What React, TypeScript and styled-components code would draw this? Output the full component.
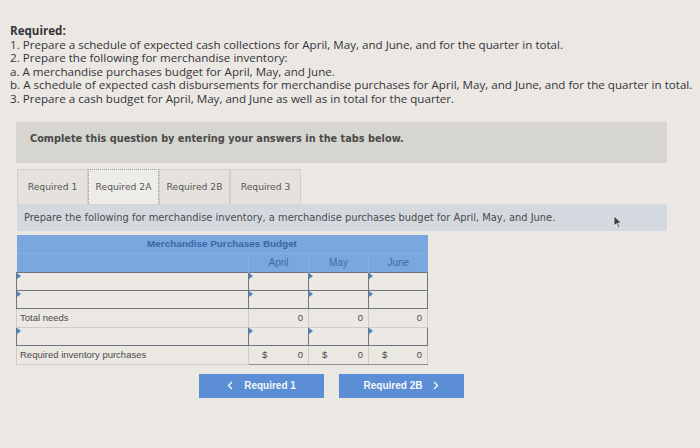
import React from "react";
import styled, { createGlobalStyle } from "styled-components";

const GlobalStyle = createGlobalStyle`
  html, body {
    margin: 0;
    padding: 0;
    background: #ebe8e3;
  }
`;

const Page = styled.div`
  position: relative;
  width: 700px;
  height: 448px;
  box-sizing: border-box;
  padding-top: 24px;
  overflow: hidden;
  background: #ebe8e3;
`;

const Instructions = styled.div`
  padding-left: 10px;
  font-family: "Open Sans", Lato, sans-serif;
  font-size: 11.6px;
  line-height: 13.6px;
  color: #34343a;
`;

const Heading = styled.div`
  font-weight: 700;
`;

const Content = styled.div`
  margin: 16px 0 0 16px;
  width: 651px;
`;

const Notice = styled.div`
  height: 41px;
  box-sizing: border-box;
  padding: 11px 0 0 14px;
  background: #d6d5d0;
  font-family: "DejaVu Sans", Verdana, sans-serif;
  font-size: 9.75px;
  font-weight: 700;
  color: #4a4a4a;
`;

const Tabs = styled.div`
  display: flex;
  margin: 6px 0 0 1px;
  height: 35px;
`;

const Tab = styled.div<{ $active?: boolean }>`
  width: 71px;
  box-sizing: border-box;
  display: flex;
  align-items: center;
  justify-content: center;
  font-family: "DejaVu Sans", Verdana, sans-serif;
  font-size: 9.2px;
  color: #555;
  background: ${({ $active }) => ($active ? "#eeece8" : "#e5e2dd")};
  border: ${({ $active }) =>
    $active ? "1px dotted #9a9894" : "1px solid #d2cfca"};
  border-bottom: none;
`;

const InfoBar = styled.div`
  margin-left: 1px;
  height: 27px;
  box-sizing: border-box;
  padding-left: 7px;
  display: flex;
  align-items: center;
  background: #d3d9de;
  font-family: "DejaVu Sans", Verdana, sans-serif;
  font-size: 9.9px;
  color: #4c4c4c;
`;

const Table = styled.table`
  margin-top: 4px;
  width: 411px;
  border-collapse: collapse;
  table-layout: fixed;
  font-family: "Liberation Sans", Arial, sans-serif;
  font-size: 9.5px;
  color: #4a4a4a;
`;

const TitleCell = styled.th`
  height: 18px;
  padding: 0;
  background: #79a7de;
  color: #3b67a3;
  font-weight: 700;
  font-size: 9.9px;
  text-align: center;
  border-bottom: 1px solid #86b0e2;
`;

const MonthCell = styled.th`
  height: 18px;
  padding: 0;
  background: #79a7de;
  color: #416ca6;
  font-weight: 400;
  font-size: 10px;
  text-align: center;
  border-left: 1px solid #8ab4e4;
`;

const InputCell = styled.td`
  position: relative;
  height: 17px;
  padding: 0;
  background: #ece9e4;
  border: 1.5px solid #6e7580;

  &::before {
    content: "";
    position: absolute;
    top: 0;
    left: 0;
    border-top: 3px solid transparent;
    border-bottom: 3px solid transparent;
    border-left: 4px solid #4f7fc0;
  }
`;

const LabelCell = styled.td`
  height: 18px;
  padding: 0 0 0 3px;
  border: 1px solid #cfccc7;
  white-space: nowrap;
`;

const ValueCell = styled.td<{ $underline?: boolean }>`
  height: 18px;
  padding: 0 5px 0 4px;
  text-align: right;
  border: 1px solid #cfccc7;
  border-bottom: ${({ $underline }) =>
    $underline ? "1.5px solid #8b8f95" : "1px solid #cfccc7"};
`;

const Money = styled.div`
  display: flex;
  justify-content: space-between;
  padding-left: 9px;
`;

const Buttons = styled.div`
  display: flex;
  gap: 15px;
  margin: 9px 0 0 183px;
`;

const NavButton = styled.div`
  width: 125px;
  height: 24px;
  display: flex;
  align-items: center;
  justify-content: center;
  gap: 11px;
  background: #5b8ed5;
  color: #f4f6fa;
  font-family: "Liberation Sans", Arial, sans-serif;
  font-size: 10px;
  font-weight: 700;
`;

const Cursor = styled.svg`
  position: absolute;
  left: 613px;
  top: 215px;
`;

const Chevron = ({ dir }: { dir: "left" | "right" }) => (
  <svg width="6" height="9" viewBox="0 0 6 9">
    <path
      d={dir === "left" ? "M5 1 L1.5 4.5 L5 8" : "M1 1 L4.5 4.5 L1 8"}
      fill="none"
      stroke="#f4f6fa"
      strokeWidth="1.4"
    />
  </svg>
);

const InputRow = () => (
  <tr>
    <InputCell />
    <InputCell />
    <InputCell />
    <InputCell />
  </tr>
);

export default function App() {
  return (
    <Page>
      <GlobalStyle />
      <Instructions>
        <Heading>Required:</Heading>
        <div>
          1. Prepare a schedule of expected cash collections for April, May,
          and June, and for the quarter in total.
        </div>
        <div>2. Prepare the following for merchandise inventory:</div>
        <div>a. A merchandise purchases budget for April, May, and June.</div>
        <div>
          b. A schedule of expected cash disbursements for merchandise
          purchases for April, May, and June, and for the quarter in total.
        </div>
        <div>
          3. Prepare a cash budget for April, May, and June as well as in total
          for the quarter.
        </div>
      </Instructions>
      <Content>
        <Notice>
          Complete this question by entering your answers in the tabs below.
        </Notice>
        <Tabs>
          <Tab>Required 1</Tab>
          <Tab $active>Required 2A</Tab>
          <Tab>Required 2B</Tab>
          <Tab>Required 3</Tab>
        </Tabs>
        <InfoBar>
          Prepare the following for merchandise inventory, a merchandise
          purchases budget for April, May, and June.
        </InfoBar>
        <Table>
          <colgroup>
            <col style={{ width: 232 }} />
            <col style={{ width: 60 }} />
            <col style={{ width: 60 }} />
            <col style={{ width: 59 }} />
          </colgroup>
          <thead>
            <tr>
              <TitleCell colSpan={4}>Merchandise Purchases Budget</TitleCell>
            </tr>
            <tr>
              <TitleCell as="th" style={{ borderBottom: "none" }} />
              <MonthCell>April</MonthCell>
              <MonthCell>May</MonthCell>
              <MonthCell>June</MonthCell>
            </tr>
          </thead>
          <tbody>
            <InputRow />
            <InputRow />
            <tr>
              <LabelCell>Total needs</LabelCell>
              <ValueCell>0</ValueCell>
              <ValueCell>0</ValueCell>
              <ValueCell>0</ValueCell>
            </tr>
            <InputRow />
            <tr>
              <LabelCell>Required inventory purchases</LabelCell>
              <ValueCell $underline>
                <Money>
                  <span>$</span>
                  <span>0</span>
                </Money>
              </ValueCell>
              <ValueCell $underline>
                <Money>
                  <span>$</span>
                  <span>0</span>
                </Money>
              </ValueCell>
              <ValueCell $underline>
                <Money>
                  <span>$</span>
                  <span>0</span>
                </Money>
              </ValueCell>
            </tr>
          </tbody>
        </Table>
        <Buttons>
          <NavButton>
            <Chevron dir="left" />
            Required 1
          </NavButton>
          <NavButton>
            Required 2B
            <Chevron dir="right" />
          </NavButton>
        </Buttons>
      </Content>
      <Cursor width="10" height="14" viewBox="0 0 10 14">
        <path
          d="M1 1 L1 11 L3.5 8.5 L5.5 13 L7 12.3 L5 8 L8.5 8 Z"
          fill="#3a3d44"
          stroke="#f0f0f0"
          strokeWidth="0.8"
        />
      </Cursor>
    </Page>
  );
}
